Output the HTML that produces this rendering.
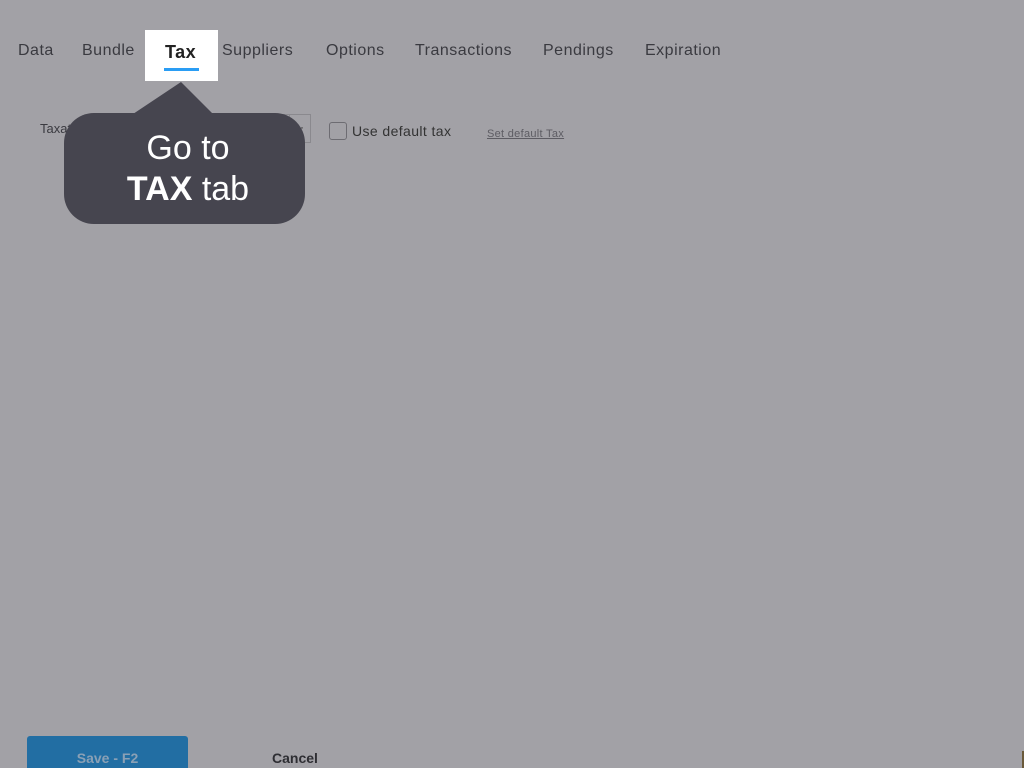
<!DOCTYPE html>
<html><head><meta charset="utf-8"><style>
html,body{margin:0;width:1024px;height:768px;overflow:hidden}
body{background:#a2a1a6;font-family:"Liberation Sans",sans-serif;position:relative}
.t{position:absolute;top:42px;font-size:16px;color:#3a3a40;letter-spacing:0.5px}
.tab{position:absolute;left:145px;top:30px;width:73px;height:51px;background:#fff}
.tab span{position:absolute;left:20px;top:12px;font-size:18px;font-weight:bold;color:#222;letter-spacing:0.5px}
.tab i{position:absolute;left:19px;top:38px;width:35px;height:3px;background:#2a9df4}
</style></head><body>
<div class="t" style="left:18px">Data</div>
<div class="t" style="left:82px">Bundle</div>
<div class="tab"><span>Tax</span><i></i></div>
<div class="t" style="left:222px">Suppliers</div>
<div class="t" style="left:326px">Options</div>
<div class="t" style="left:415px">Transactions</div>
<div class="t" style="left:543px">Pendings</div>
<div class="t" style="left:645px">Expiration</div>
<div style="position:absolute;left:40px;top:121px;font-size:13px;color:#3a3a40">Taxat</div>
<div style="position:absolute;left:90px;top:114px;width:219px;height:27px;border:1px solid #8a898e"></div>
<div style="position:absolute;left:289px;top:114px;width:20px;height:27px;border-left:1px solid #8a898e;font-size:12px;color:#333;text-align:center;line-height:26px">··</div>
<div style="position:absolute;left:329px;top:122px;width:16px;height:16px;border:1px solid #6d6c72;border-radius:3px"></div>
<div style="position:absolute;left:352px;top:123px;font-size:14px;color:#333;letter-spacing:0.4px">Use default tax</div>
<div style="position:absolute;left:487px;top:128px;font-size:11px;color:#5d5c63;text-decoration:underline;letter-spacing:0.3px">Set default Tax</div>
<svg style="position:absolute;left:0;top:0" width="400" height="240">
<polygon points="133,114 181,82 213,114" fill="#46454f"/>
<rect x="64" y="113" width="241" height="111" rx="30" fill="#46454f"/>
<text x="188" y="159" font-size="34" fill="#fff" text-anchor="middle" font-family="Liberation Sans">Go to</text>
<text x="188" y="200" font-size="34" fill="#fff" text-anchor="middle" font-family="Liberation Sans"><tspan font-weight="bold">TAX</tspan> tab</text>
</svg>
<div style="position:absolute;left:27px;top:736px;width:161px;height:32px;background:#226ea3;border-radius:3px 3px 0 0;color:#8aa0b5;font-size:14px;text-align:center;line-height:44px;font-weight:bold;overflow:hidden">Save - F2</div>
<div style="position:absolute;left:272px;top:750px;font-size:14px;font-weight:bold;color:#2e2e33">Cancel</div>
<div style="position:absolute;left:1022px;top:751px;width:2px;height:17px;background:#6b5a3a"></div>
</body></html>
